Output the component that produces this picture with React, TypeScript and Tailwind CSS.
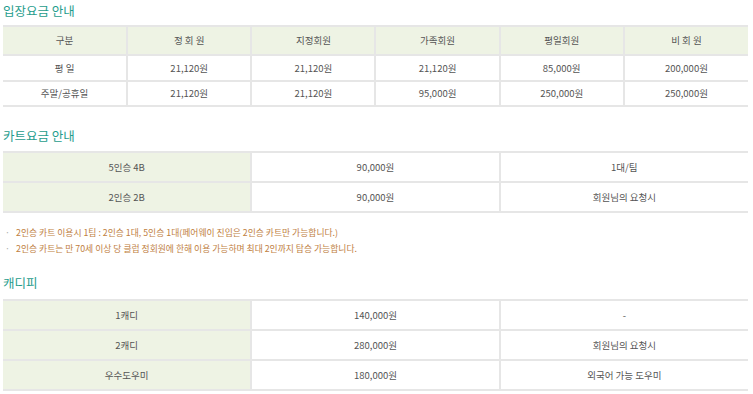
const font = { fontFamily: '"Noto Sans CJK KR", "Noto Sans", sans-serif' };

const entryHead = ["구분", "정 회 원", "지정회원", "가족회원", "평일회원", "비 회 원"];
const entryRows = [
  ["평 일", "21,120원", "21,120원", "21,120원", "85,000원", "200,000원"],
  ["주말/공휴일", "21,120원", "21,120원", "95,000원", "250,000원", "250,000원"],
];

const cartRows = [
  ["5인승 4B", "90,000원", "1대/팀"],
  ["2인승 2B", "90,000원", "회원님의 요청시"],
];

const caddyRows = [
  ["1캐디", "140,000원", "-"],
  ["2캐디", "280,000원", "회원님의 요청시"],
  ["우수도우미", "180,000원", "외국어 가능 도우미"],
];

function Title({ children }: { children: string }) {
  return <h2 className="text-[12.5px] leading-[20px] text-[#1e9c8c] font-normal">{children}</h2>;
}

function ThreeCol({ rows }: { rows: string[][] }) {
  return (
    <table className="w-full table-fixed border-collapse border-t-2 border-[#e6e6e6] text-[9.5px] text-[#555]">
      <tbody>
        {rows.map((r, i) => (
          <tr key={i} className="h-[30px] border-b-2 border-[#e6e6e6]">
            <td className="bg-[#eef3e4] text-center">{r[0]}</td>
            <td className="border-l-2 border-[#e6e6e6] text-center">{r[1]}</td>
            <td className="border-l-2 border-[#e6e6e6] text-center">{r[2]}</td>
          </tr>
        ))}
      </tbody>
    </table>
  );
}

export default function App() {
  return (
    <div className="min-h-screen bg-white pl-[3px] pr-[5px]" style={font}>
      <div className="pt-[1px]">
        <Title>입장요금 안내</Title>
      </div>
      <table className="mt-[4px] w-full table-fixed border-collapse border-t-2 border-[#e6e6e6] text-[9.5px] text-[#555]">
        <thead>
          <tr className="h-[29px] bg-[#eef3e4] border-b-2 border-[#e6e6e6]">
            {entryHead.map((h, i) => (
              <th key={h} className={`font-normal text-center ${i > 0 ? "border-l-2 border-[#e6e6e6]" : ""}`}>
                {h}
              </th>
            ))}
          </tr>
        </thead>
        <tbody>
          {entryRows.map((r, ri) => (
            <tr key={ri} className={`${ri === 0 ? "h-[26px]" : "h-[25px]"} border-b-2 border-[#e6e6e6]`}>
              {r.map((c, i) => (
                <td key={i} className={`text-center ${i > 0 ? "border-l-2 border-[#e6e6e6]" : ""}`}>
                  {c}
                </td>
              ))}
            </tr>
          ))}
        </tbody>
      </table>

      <div className="mt-[19px]">
        <Title>카트요금 안내</Title>
      </div>
      <div className="mt-[5px]">
        <ThreeCol rows={cartRows} />
      </div>

      <ul className="mt-[12px] text-[8.8px] leading-[16px] text-[#c0803f]">
        <li className="flex">
          <span className="w-[13px] pl-[2px] text-[#aaa]">·</span>
          <span>2인승 카트 이용시 1팀 : 2인승 1대, 5인승 1대(페어웨이 진입은 2인승 카트만 가능합니다.)</span>
        </li>
        <li className="flex">
          <span className="w-[13px] pl-[2px] text-[#aaa]">·</span>
          <span>2인승 카트는 만 70세 이상 당 클럽 정회원에 한해 이용 가능하며 최대 2인까지 탑승 가능합니다.</span>
        </li>
      </ul>

      <div className="mt-[16px]">
        <Title>캐디피</Title>
      </div>
      <div className="mt-[6px]">
        <ThreeCol rows={caddyRows} />
      </div>
    </div>
  );
}
